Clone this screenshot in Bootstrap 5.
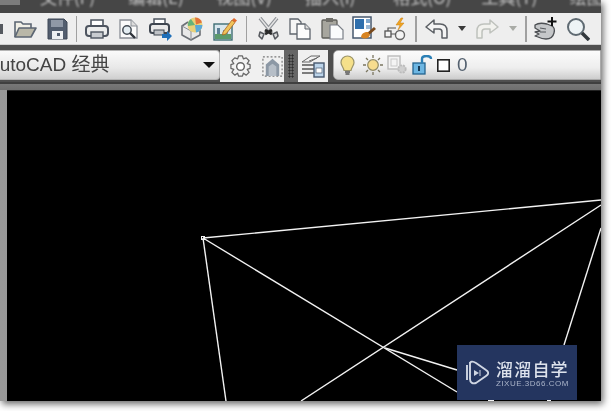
<!DOCTYPE html>
<html lang="zh">
<head>
<meta charset="utf-8">
<title>AutoCAD 经典</title>
<link href="https://cdn.jsdelivr.net/npm/bootstrap@5.3.0/dist/css/bootstrap.min.css" rel="stylesheet">
<style>
html,body{height:100%;margin:0;background:#fff;overflow:hidden}
body{font-family:"Liberation Sans","Noto Sans CJK SC",sans-serif}
.cad-win{width:601px;height:401px;background:#4b4b4b;box-shadow:2px 3px 7px rgba(0,0,0,.6);position:relative;overflow:hidden}
.cad-menu{height:13px;background:#464646;overflow:hidden;padding-left:40px;flex:none;position:relative}
.cad-menu::before{content:"";position:absolute;left:0;top:0;width:20px;height:5px;background:#7c7c7c}
.cad-menu-in{margin-top:-13px;filter:blur(.9px)}
.cad-menu-item{width:88.3px;flex:none;font-size:17px;line-height:20px;color:#c4c4c4;white-space:nowrap;font-family:"Noto Sans CJK SC",sans-serif}
.cad-tb1{height:32px;background:#eeeeee;flex:none;border-bottom:1px solid #cfcfcf;overflow:hidden}
.cad-edge{width:3px;height:10px;flex:none;background:#55595f;margin-right:5.5px}
.cad-slot{width:32px;flex:none;display:flex;justify-content:center;align-items:center;filter:blur(.45px)}
.cad-sep{width:8px;flex:none;display:flex;justify-content:center}
.cad-sep-a{width:11.5px}
.cad-sepline{width:1.5px;height:26px;background:#a0a0a0;display:block}
.cad-drop{width:19px;flex:none;display:flex;justify-content:center;filter:blur(.35px)}
.cad-gapd{height:5px;background:#4f4f4f;flex:none}
.cad-tb2{height:32px;flex:none;background:#4f4f4f}
.cad-combo{width:220px;height:30px;background:linear-gradient(#fafafa,#e8e8e8 60%,#cfcfcf);border-radius:0 4px 4px 0;border:1px solid #b5b5b5;border-left:0;overflow:hidden;flex:none;padding-right:4px}
.cad-combo-t{font-size:19px;line-height:28px;color:#444;margin-left:-13px;filter:blur(.4px);white-space:nowrap}
.cad-arrow{width:0;height:0;border-left:6px solid transparent;border-right:6px solid transparent;border-top:6px solid #111}
.cad-pane{width:64px;height:32px;background:#f0f0f0;flex:none;padding-left:4px}
.cad-grip{width:14px;height:32px;background:#666;flex:none;justify-content:center;align-items:center}
.cad-griplines{width:6px;height:24px;background-image:radial-gradient(#2e2e2e .9px,transparent 1.2px);background-size:3px 3px}
.cad-pane2{width:30px;height:32px;background:#f0f0f0;flex:none;justify-content:center;align-items:center}
.cad-space{width:5px;flex:none}
.cad-layer{flex:1;height:30px;background:linear-gradient(#fbfbfb,#eeeeee 60%,#cdcdcd);border-radius:5px 0 0 5px;border:1px solid #aaa;padding-left:6px}
.cad-zero{font-size:19px;color:#54616f;line-height:28px;filter:blur(.4px);margin-left:7px}
.cad-band{height:8px;background:linear-gradient(#3f3f3f,#3f3f3f 25%,#777 30%,#6e6e6e);flex:none}
.cad-work{flex:1;min-height:0;background:linear-gradient(90deg,#999,#7e7e7e 60%,#666);padding-left:7px}
.cad-canvas{background:#000;flex:1;height:100%;border-top:1px solid #222}
.cad-canvas svg{display:block;filter:blur(.3px)}
.cad-logo{position:absolute;left:457px;top:345px;width:120px;height:55px;background:#24355f;padding:15px 0 0 8px}
.cad-logo-i{flex:none;filter:blur(.3px)}
.cad-logo-x{margin-left:7px}
.cad-logo-t{font-family:"Noto Sans CJK SC",sans-serif;font-size:17px;line-height:18px;letter-spacing:1.2px;white-space:nowrap;filter:blur(.3px);color:#dde2ec;font-weight:500}
.cad-logo-s{font-size:8px;line-height:9px;letter-spacing:.5px;color:#a9b3c8;white-space:nowrap;margin-top:1px;filter:blur(.2px)}
</style>
</head>
<body>
<div class="cad-win d-flex flex-column">
  <div class="cad-menu">
    <div class="cad-menu-in d-flex">
      <span class="cad-menu-item">文件(F)</span><span class="cad-menu-item">编辑(E)</span><span class="cad-menu-item">视图(V)</span><span class="cad-menu-item">插入(I)</span><span class="cad-menu-item">格式(O)</span><span class="cad-menu-item">工具(T)</span><span class="cad-menu-item">绘图(D)</span>
    </div>
  </div>

  <div class="cad-tb1 d-flex align-items-center">
    <span class="cad-edge"></span>
    <span class="cad-slot"><svg width="24" height="20" viewBox="0 0 24 20"><path d="M2 18V3h6l2 2h8v4" fill="#f1efe6" stroke="#5c6673" stroke-width="1.600"/><path d="M2 18l4-9h17l-5 9z" fill="#b9b7a8" stroke="#5c6673" stroke-width="1.600" stroke-linejoin="round"/></svg></span>
    <span class="cad-slot"><svg width="22" height="22" viewBox="0 0 22 22"><path d="M2 1h16l3 3v17H2z" fill="#525d6e" stroke="#3f4857"/><rect x="5" y="2" width="12" height="7" fill="#8f98a6"/><rect x="6" y="13" width="11" height="8" fill="#eef0f2"/><rect x="11" y="15" width="3" height="3" fill="#525d6e"/></svg></span>
    <span class="cad-sep"><span class="cad-sepline"></span></span>
    <span class="cad-slot"><svg width="24" height="22" viewBox="0 0 24 22"><path d="M6 8V2h12v6" fill="#fff" stroke="#4e5560" stroke-width="1.600"/><rect x="1" y="8" width="22" height="10" rx="3" fill="#eceded" stroke="#4e5560" stroke-width="2"/><rect x="6" y="14" width="12" height="6" fill="#c9ccd0" stroke="#4e5560" stroke-width="1.400"/></svg></span>
    <span class="cad-slot"><svg width="22" height="22" viewBox="0 0 22 22"><path d="M2 2h11l6 6v12H2z" fill="#fbfbfb" stroke="#8a8f96" stroke-width="1.300"/><path d="M13 2v6h6" fill="#dcdcdc" stroke="#8a8f96"/><circle cx="9" cy="12" r="4.200" fill="#e4edf2" stroke="#444c55" stroke-width="1.500"/><path d="M12 15l5 5" stroke="#2e333a" stroke-width="2.400"/></svg></span>
    <span class="cad-slot"><svg width="24" height="24" viewBox="0 0 24 24"><path d="M5 7V2h11v5" fill="#fff" stroke="#4e5560" stroke-width="1.500"/><rect x="1" y="7" width="19" height="9" rx="2.500" fill="#e9e9e9" stroke="#3f4650" stroke-width="2"/><rect x="5" y="13" width="10" height="5" fill="#bfc2c6" stroke="#3f4650"/><path d="M13 17h5v-3l5 5-5 5v-3h-5z" fill="#1f6fb8"/></svg></span>
    <span class="cad-slot"><svg width="24" height="24" viewBox="0 0 24 24"><path d="M7 5L1 9v9l9 5 9-5v-5" fill="#e8e8e8" stroke="#6c7076" stroke-width="1.600" stroke-linejoin="round"/><path d="M1 9l9 5 5-3M10 14v9" fill="none" stroke="#8b8f94"/><circle cx="14" cy="8" r="7.500" fill="#e8d17a"/><path d="M14 .5a7.500 7.500 0 0 1 7 5l-6 2z" fill="#e2733a"/><path d="M21.400 8A7.500 7.500 0 0 1 15 15.400L14 8z" fill="#5aa9d8"/><path d="M7 9a7 7 0 0 1 3-7l4 6z" fill="#66b27a"/></svg></span>
    <span class="cad-slot"><svg width="24" height="24" viewBox="0 0 24 24"><rect x="1" y="7" width="18" height="16" fill="#d9e7ee" stroke="#3f6e74" stroke-width="1.400"/><rect x="2" y="17" width="16" height="5" fill="#5c9a6c"/><rect x="4" y="11" width="3" height="6" fill="#5c7f95"/><rect x="10" y="13" width="5" height="4" fill="#7d9cb0"/><path d="M10 15L19 3l3 2.500L13 17l-3.500 1z" fill="#f0c35a" stroke="#a8621c" stroke-width=".8"/><path d="M19 3l2-2 3 2.500-2 2z" fill="#e0692c"/></svg></span>
    <span class="cad-sep cad-sep-a"><span class="cad-sepline"></span></span>
    <span class="cad-slot"><svg width="23" height="24" viewBox="0 0 23 24"><path d="M3 1l9 11M20 1l-9 11" stroke="#8f9398" stroke-width="3.600"/><path d="M3 1l9 11M20 1l-9 11" stroke="#e6e6e6" stroke-width="1.400"/><path d="M8 13l7 4M15 13l-7 4" stroke="#2a2a2a" stroke-width="3"/><path d="M3 15l4 2-2 5-3-3zM20 15l-4 2 2 5 3-3z" fill="#dcdcdc" stroke="#55585d" stroke-width="1.500" stroke-linejoin="round"/></svg></span>
    <span class="cad-slot"><svg width="23" height="22" viewBox="0 0 23 22"><path d="M1 1h8l3 3v12H1z" fill="#f5f5f5" stroke="#5f656d" stroke-width="1.300"/><path d="M8 6h8l5 5v10H8z" fill="#fcfcfc" stroke="#5f656d" stroke-width="1.300"/><path d="M16 6v5h5" fill="#ddd" stroke="#5f656d"/></svg></span>
    <span class="cad-slot"><svg width="23" height="23" viewBox="0 0 23 23"><rect x="1" y="3" width="15" height="18" rx="1" fill="#a7a69e" stroke="#5f5f5a" stroke-width="1.300"/><rect x="5" y="1" width="7" height="4" fill="#6e6d68"/><path d="M9 8h8l5 5v9H9z" fill="#fafbfc" stroke="#7a7f87" stroke-width="1.200"/></svg></span>
    <span class="cad-slot"><svg width="25" height="25" viewBox="0 0 25 25"><rect x="1" y="1" width="18" height="21" fill="#fff" stroke="#47586e" stroke-width="1.500"/><rect x="3" y="3" width="9" height="10" fill="#2f6fad"/><rect x="14" y="3" width="4" height="4" fill="#7fa6cc"/><rect x="14" y="9" width="4" height="4" fill="#9cb8d4"/><path d="M22 11l2 2-7 6-2-2z" fill="#7a4a1c"/><path d="M9 21c1-5 5-5 7-5l2 3c-1 3-5 5-9 2z" fill="#d98421"/></svg></span>
    <span class="cad-slot"><svg width="24" height="24" viewBox="0 0 24 24"><rect x="1" y="14" width="6" height="6" fill="#f4f4f4" stroke="#555" stroke-width="1.300"/><circle cx="16" cy="18" r="4.500" fill="#f4f4f4" stroke="#666" stroke-width="1.400"/><path d="M7 17h5M4 14v-3h8" fill="none" stroke="#555" stroke-width="1.200"/><path d="M17 1l-5 7h4l-2 5 6-7h-4l3-5z" fill="#f0a422" stroke="#c67d10" stroke-width=".5"/></svg></span>
    <span class="cad-sep"><span class="cad-sepline"></span></span>
    <span class="cad-slot"><svg width="23" height="20" viewBox="0 0 23 20"><path d="M1 8l8-7v4h6c5 0 7 3 7 7v7h-5v-6c0-2-1-3-3-3H9v4z" fill="#f4f4f4" stroke="#5b5f64" stroke-width="1.500" stroke-linejoin="round"/></svg></span>
    <span class="cad-drop"><svg width="8" height="5" viewBox="0 0 8 5"><path d="M0 0h8L4 5z" fill="#3a3a3a"/></svg></span>
    <span class="cad-slot"><svg width="23" height="20" viewBox="0 0 23 20"><path d="M22 8l-8-7v4H8c-5 0-7 3-7 7v7h5v-6c0-2 1-3 3-3h5v4z" fill="#f2f2ee" stroke="#bfc2bd" stroke-width="1.500" stroke-linejoin="round"/></svg></span>
    <span class="cad-drop"><svg width="8" height="5" viewBox="0 0 8 5"><path d="M0 0h8L4 5z" fill="#a9aba6"/></svg></span>
    <span class="cad-sep"><span class="cad-sepline"></span></span>
    <span class="cad-slot"><svg width="24" height="24" viewBox="0 0 24 24"><path d="M1 8c3-2 8-2 12-1l5 2c2 1 3 3 2 7-1 4-4 6-8 6-3 0-6-1-8-2l-3-1 4-2-4-2 5-1-5-3z" fill="#c5c7c9" stroke="#4c4f53" stroke-width="1.300" stroke-linejoin="round"/><path d="M6 11l6 1M6 15l6 0" stroke="#55585c" stroke-width="1"/><path d="M18 0v9M13.500 4.500h9" stroke="#111" stroke-width="2"/></svg></span>
    <span class="cad-slot"><svg width="24" height="24" viewBox="0 0 24 24"><circle cx="10" cy="10" r="8" fill="#eef4f6" stroke="#5f6a72" stroke-width="2"/><path d="M16 16l7 7" stroke="#33383d" stroke-width="3.500"/></svg></span>
    <span class="cad-slot"><svg width="24" height="24" viewBox="0 0 24 24"><circle cx="16" cy="10" r="8" fill="#eef4f6" stroke="#5f6a72" stroke-width="2"/></svg></span>
  </div>

  <div class="cad-gapd"></div>

  <div class="cad-tb2 d-flex">
    <div class="cad-combo d-flex align-items-center justify-content-between">
      <span class="cad-combo-t">AutoCAD 经典</span>
      <span class="cad-arrow"></span>
    </div>
    <div class="cad-pane d-flex align-items-center">
      <span class="cad-slot"><svg width="23" height="23" viewBox="0 0 24 24"><path d="M10 1h4l1 3 3-1 3 3-2 3 3 1v4l-3 1 2 3-3 3-3-2-1 3h-4l-1-3-3 2-3-3 2-3-3-1v-4l3-1-2-3 3-3 3 1z" fill="#f1f1f1" stroke="#666" stroke-width="1.300" stroke-linejoin="round"/><circle cx="12" cy="12" r="4" fill="#fff" stroke="#666" stroke-width="1.500"/></svg></span>
      <span class="cad-slot"><svg width="23" height="23" viewBox="0 0 24 24"><rect x="2" y="2" width="20" height="20" fill="none" stroke="#777" stroke-width="1.200" stroke-dasharray="2 2"/><path d="M5 22V10l7-6 7 6v12z" fill="#8c98a5"/><path d="M8 22V12l4-3 4 3v10z" fill="#b6bec7"/></svg></span>
    </div>
    <div class="cad-grip d-flex"><span class="cad-griplines"></span></div>
    <div class="cad-pane2 d-flex"><svg width="24" height="24" viewBox="0 0 24 24"><path d="M10 2h9L9 8H1z" fill="#f3f3f3" stroke="#666"/><path d="M1 11h12M1 15h12M1 19h12" stroke="#555" stroke-width="1.400"/><path d="M8 7l8-3" stroke="#666"/><rect x="13" y="9" width="10" height="14" fill="#bcd4ea" stroke="#47586e" stroke-width="1.400"/><rect x="15" y="14" width="6" height="5" fill="#fff" stroke="#47586e" stroke-width=".7"/></svg></div>
    <div class="cad-space"></div>
    <div class="cad-layer d-flex align-items-center">
      <svg width="15" height="21" viewBox="0 0 15 21"><path d="M7.500 1a6.500 6.500 0 0 1 6.500 6.500c0 3-2.500 4.500-3 8H4c-.5-3.500-3-5-3-8A6.500 6.500 0 0 1 7.500 1z" fill="#f5e08a" stroke="#9b9468" stroke-width="1.200"/><path d="M5 17h5M5.500 19h4" stroke="#555" stroke-width="1.300"/></svg>
      <svg class="ms-2" width="20" height="20" viewBox="0 0 20 20"><circle cx="10" cy="10" r="5.300" fill="#f7dc8e" stroke="#918a65" stroke-width="1.200"/><path d="M10 0v3M10 17v3M0 10h3M17 10h3M3 3l2 2M15 15l2 2M17 3l-2 2M3 17l2-2" stroke="#7a7660" stroke-width="1.300"/></svg>
      <svg class="ms-1" width="21" height="20" viewBox="0 0 21 20"><rect x="1" y="1" width="12" height="13" fill="#f4f4f4" stroke="#bbb" stroke-width="1.400"/><rect x="4" y="4" width="6" height="7" fill="none" stroke="#c8c8c8"/><circle cx="15" cy="14" r="3.700" fill="#cfcfcf" stroke="#bbb" stroke-width="1.800" stroke-dasharray="2 1"/></svg>
      <svg class="ms-1" width="21" height="20" viewBox="0 0 21 20"><rect x="1" y="8" width="12" height="11" fill="#6db6e2" stroke="#24648f" stroke-width="1.300"/><path d="M7 11v5" stroke="#173a55" stroke-width="2"/><path d="M10 8V4c0-4 9-4 9 0" fill="none" stroke="#2b7fb5" stroke-width="2.400"/></svg>
      <svg class="ms-1" width="13" height="13" viewBox="0 0 13 13"><rect x=".8" y=".8" width="11.400" height="11.400" fill="#fff" stroke="#222" stroke-width="1.600"/></svg>
      <span class="cad-zero">0</span>
    </div>
  </div>

  <div class="cad-band"></div>

  <div class="cad-work d-flex">
    <div class="cad-canvas">
      <svg width="594" height="310" viewBox="7 91 594 310" fill="none" stroke="#f2f2f2" stroke-width="1.400">
        <path d="M203 238L601 200"/>
        <path d="M203 238L226 401"/>
        <path d="M203 238L457 392"/>
        <path d="M601 205L301 401"/>
        <path d="M385 348L457 370"/>
        <path d="M601 228L564 345"/>
        <rect x="201.500" y="236.500" width="3" height="3" stroke-width="1"/>
        <path d="M488 400.500h6M547 400.500h4" stroke-width="2"/>
      </svg>
    </div>
  </div>

  <div class="cad-logo d-flex">
    <svg class="cad-logo-i" width="24" height="26" viewBox="0 0 24 26" fill="none" stroke="#cfd6e3" stroke-width="1.900"><path d="M5 2v17c0 4 3 5 6 4l10-7c3-2 3-4 0-6L11 3C8 1 5 1 5 4"/><path d="M2 5v15"/><path d="M9 10l5 3-5 3z" fill="#cfd6e3" stroke="none"/><path d="M15 10v6" stroke-width="1"/></svg>
    <div class="cad-logo-x">
      <div class="cad-logo-t">溜溜自学</div>
      <div class="cad-logo-s">ZIXUE.3D66.COM</div>
    </div>
  </div>
</div>
<script src="https://cdn.jsdelivr.net/npm/bootstrap@5.3.0/dist/js/bootstrap.bundle.min.js"></script>
</body>
</html>
